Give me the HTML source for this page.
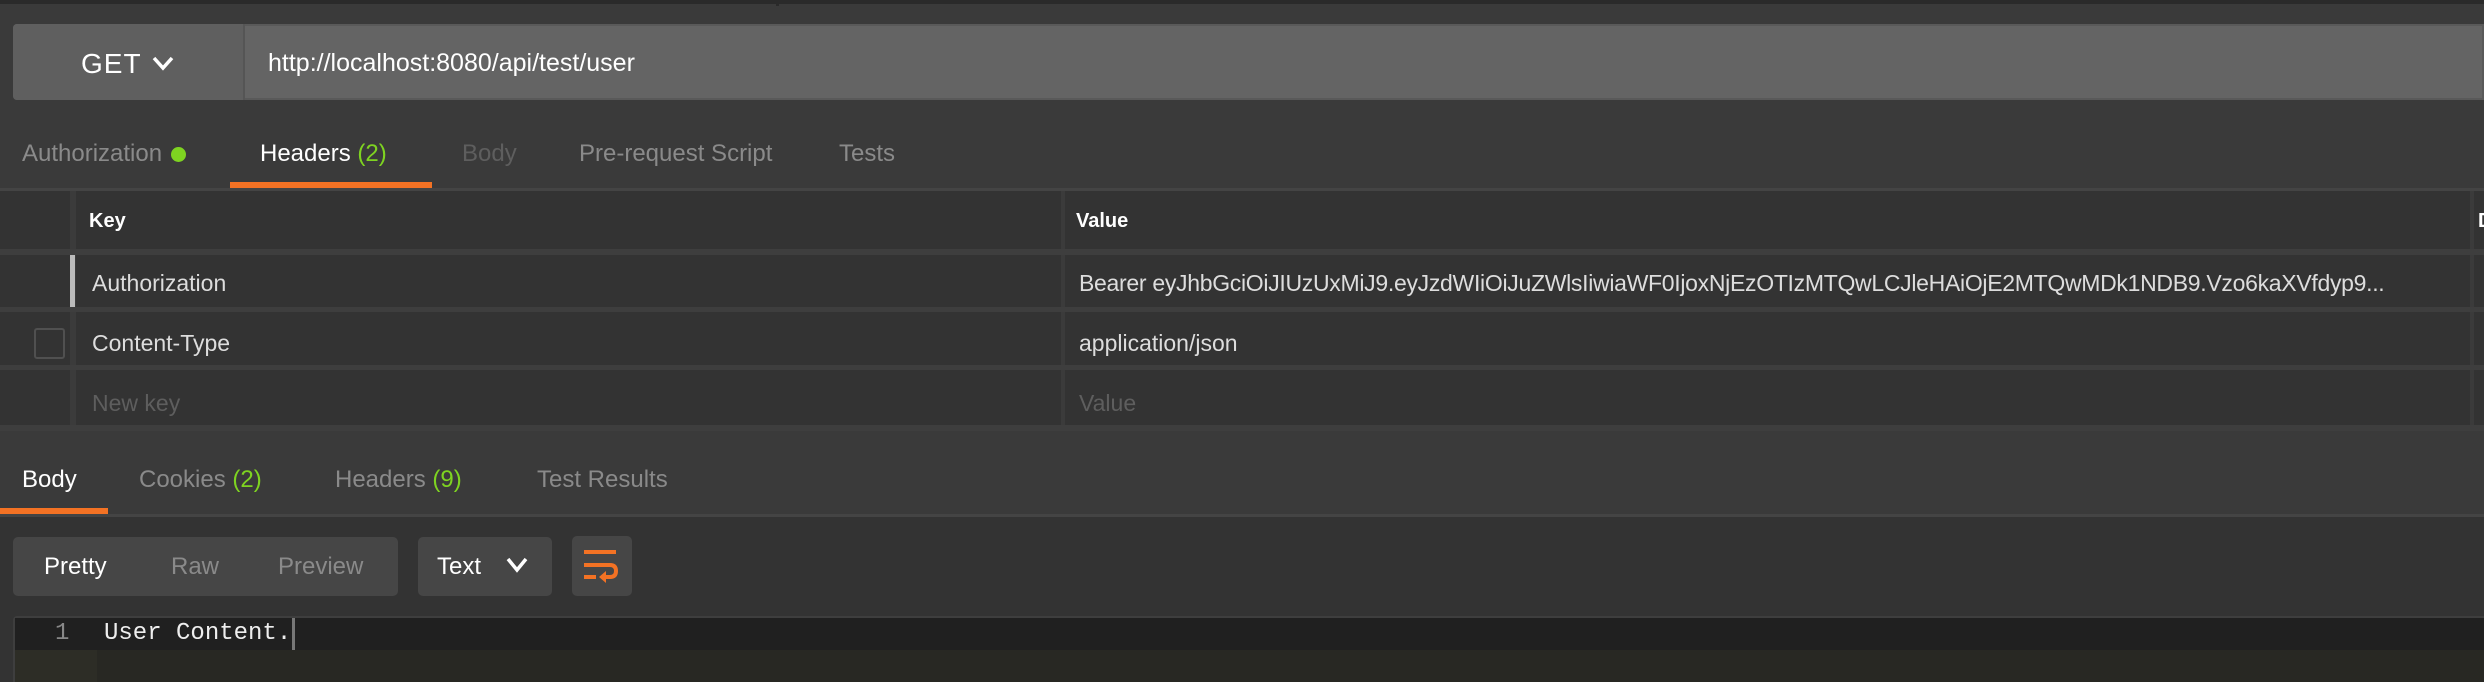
<!DOCTYPE html>
<html><head><meta charset="utf-8"><style>
*{margin:0;padding:0;box-sizing:border-box}
body{width:2484px;height:682px;background:#3a3a3a;overflow:hidden;position:relative;font-family:"Liberation Sans",sans-serif;}
.a{position:absolute;white-space:nowrap}
.t{font-size:24px;line-height:30px}
.g{color:#7ed321}
</style></head><body>
<div class="a" style="left:0;top:0;width:2484px;height:4px;background:#2a2a2a"></div>
<div class="a" style="left:776px;top:0;width:3px;height:6px;background:#2a2a2a"></div>
<!-- URL bar -->
<div class="a" style="left:13px;top:24px;width:2471px;height:76px;background:#646464;border:2px solid #595959;border-radius:4px 0 0 4px"></div>
<div class="a" style="left:13px;top:24px;width:232px;height:76px;background:#5f5f5f;border-right:2px solid #555;border-radius:4px 0 0 4px"></div>
<div class="a" style="left:81px;top:47px;font-size:28px;line-height:34px;color:#fff;letter-spacing:1px">GET</div>
<svg class="a" style="left:152px;top:55px" width="22" height="16" viewBox="0 0 22 16"><path d="M2 3 L11 13 L20 3" stroke="#fff" stroke-width="3.5" fill="none"/></svg>
<div class="a" style="left:268px;top:47px;font-size:25px;line-height:32px;color:#fff">http://localhost:8080/api/test/user</div>
<!-- request tabs -->
<div class="a t" style="left:22px;top:139px;color:#8a8a8a">Authorization <span style="display:inline-block;width:15px;height:15px;border-radius:50%;background:#7ed321;vertical-align:middle;margin-left:2px"></span></div>
<div class="a t" style="left:260px;top:139px;color:#fff">Headers <span class="g">(2)</span></div>
<div class="a t" style="left:462px;top:139px;color:#5e5e5e">Body</div>
<div class="a t" style="left:579px;top:139px;color:#8a8a8a">Pre-request Script</div>
<div class="a t" style="left:839px;top:139px;color:#8a8a8a">Tests</div>
<div class="a" style="left:230px;top:182px;width:202px;height:6px;background:#f37224"></div>
<div class="a" style="left:0;top:188px;width:2484px;height:3px;background:#444"></div>
<!-- table -->
<div class="a" style="left:0;top:191px;width:2484px;height:240px;background:#333"></div>
<div class="a" style="left:70px;top:191px;width:6px;height:240px;background:#3b3b3b"></div>
<div class="a" style="left:1061px;top:191px;width:4px;height:240px;background:#3b3b3b"></div>
<div class="a" style="left:2470px;top:191px;width:4px;height:240px;background:#3b3b3b"></div>
<div class="a" style="left:0;top:249px;width:2484px;height:6px;background:#3e3e3e"></div>
<div class="a" style="left:0;top:307px;width:2484px;height:5px;background:#3e3e3e"></div>
<div class="a" style="left:0;top:365px;width:2484px;height:5px;background:#3e3e3e"></div>
<div class="a" style="left:0;top:425px;width:2484px;height:6px;background:#3e3e3e"></div>
<div class="a" style="left:89px;top:208px;font-size:20px;line-height:26px;color:#fff;font-weight:bold">Key</div>
<div class="a" style="left:1076px;top:208px;font-size:20px;line-height:26px;color:#fff;font-weight:bold">Value</div>
<div class="a" style="left:2478px;top:208px;font-size:20px;line-height:26px;color:#fff;font-weight:bold">D</div>
<div class="a" style="left:70px;top:255px;width:5px;height:52px;background:#bbb"></div>
<div class="a" style="left:92px;top:268px;font-size:23px;line-height:30px;color:#ddd">Authorization</div>
<div class="a" style="left:1079px;top:268px;font-size:23px;line-height:30px;color:#ddd;letter-spacing:-0.3px">Bearer eyJhbGciOiJIUzUxMiJ9.eyJzdWIiOiJuZWlsIiwiaWF0IjoxNjEzOTIzMTQwLCJleHAiOjE2MTQwMDk1NDB9.Vzo6kaXVfdyp9...</div>
<div class="a" style="left:34px;top:328px;width:31px;height:31px;border:2px solid #505050;border-radius:3px"></div>
<div class="a" style="left:92px;top:328px;font-size:23px;line-height:30px;color:#ddd">Content-Type</div>
<div class="a" style="left:1079px;top:328px;font-size:23px;line-height:30px;color:#ddd">application/json</div>
<div class="a" style="left:92px;top:388px;font-size:23px;line-height:30px;color:#5e5e5e">New key</div>
<div class="a" style="left:1079px;top:388px;font-size:23px;line-height:30px;color:#5e5e5e">Value</div>
<!-- response tabs -->
<div class="a t" style="left:22px;top:465px;color:#fff">Body</div>
<div class="a t" style="left:139px;top:465px;color:#8a8a8a">Cookies <span class="g">(2)</span></div>
<div class="a t" style="left:335px;top:465px;color:#8a8a8a">Headers <span class="g">(9)</span></div>
<div class="a t" style="left:537px;top:465px;color:#8a8a8a">Test Results</div>
<div class="a" style="left:0;top:508px;width:108px;height:6px;background:#f37224"></div>
<div class="a" style="left:0;top:514px;width:2484px;height:3px;background:#444"></div>
<div class="a" style="left:0;top:517px;width:2484px;height:165px;background:#333"></div>
<div class="a" style="left:13px;top:537px;width:385px;height:59px;background:#464646;border-radius:5px"></div>
<div class="a t" style="left:44px;top:552px;color:#fff">Pretty</div>
<div class="a t" style="left:171px;top:552px;color:#8a8a8a">Raw</div>
<div class="a t" style="left:278px;top:552px;color:#8a8a8a">Preview</div>
<div class="a" style="left:418px;top:537px;width:134px;height:59px;background:#464646;border-radius:5px"></div>
<div class="a t" style="left:437px;top:552px;color:#fff">Text</div>
<svg class="a" style="left:506px;top:557px" width="22" height="16" viewBox="0 0 22 16"><path d="M2 2 L11 13 L20 2" stroke="#fff" stroke-width="3.5" fill="none"/></svg>
<div class="a" style="left:572px;top:536px;width:60px;height:60px;background:#464646;border-radius:5px"></div>
<svg class="a" style="left:572px;top:536px" width="60" height="60" viewBox="0 0 60 60"><g fill="none" stroke="#f37224" stroke-width="4"><path d="M12 16 H44"/><path d="M12 29 H38 Q44 29 44 35 Q44 41 38 41 H31"/><path d="M12 41 H24"/></g><path d="M27 41 L34 35 L34 47 Z" fill="#f37224"/></svg>
<!-- editor -->
<div class="a" style="left:13px;top:616px;width:2471px;height:66px;background:#282823;border-top:2px solid #3e3e3e;border-left:2px solid #3e3e3e;border-radius:4px 0 0 0"></div>
<div class="a" style="left:15px;top:618px;width:82px;height:64px;background:#2d2d26"></div>
<div class="a" style="left:15px;top:618px;width:2469px;height:32px;background:#202020"></div>
<div class="a" style="left:55px;top:619px;font-family:'Liberation Mono',monospace;font-size:24px;line-height:30px;color:#888">1</div>
<div class="a" style="left:104px;top:619px;font-family:'Liberation Mono',monospace;font-size:24px;line-height:30px;color:#eee">User Content.</div>
<div class="a" style="left:292px;top:618px;width:3px;height:32px;background:#777"></div>
</body></html>
